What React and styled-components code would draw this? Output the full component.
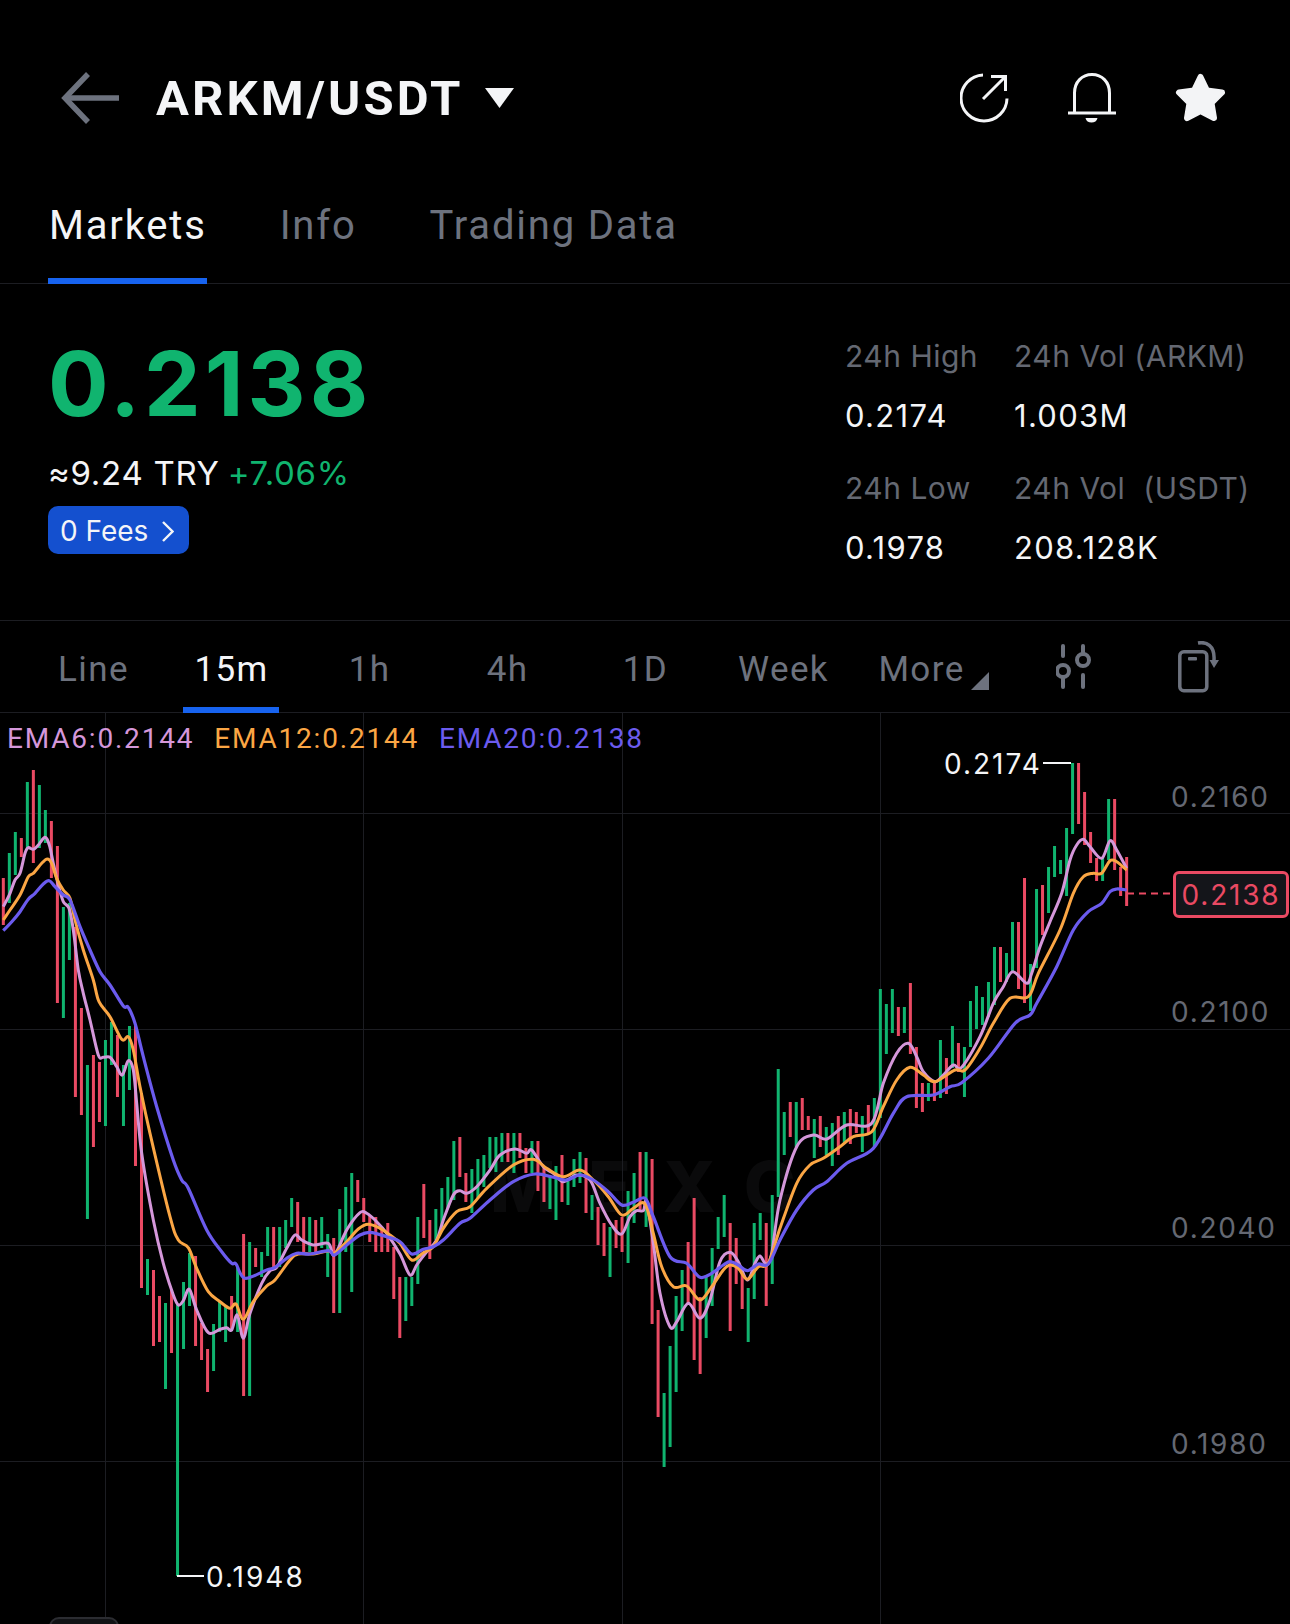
import React from "react";
import styled, { createGlobalStyle } from "styled-components";

const GREEN = "#10b46f";
const RED = "#ea4a63";
const GRAY = "#6d727e";
const LABEL = "#646872";
const BLUE = "#1763ef";
const LINE = "#1c1d22";

const Global = createGlobalStyle`
  html, body { margin: 0; padding: 0; background: #000; }
  * { box-sizing: border-box; }
`;

const Page = styled.div`
  width: 1290px;
  height: 1624px;
  overflow: hidden;
  background: #000;
  color: #f4f5f7;
  font-family: "Inter", "Liberation Sans", sans-serif;
`;

const TopBar = styled.header`
  height: 196px;
  display: flex;
  align-items: center;
  padding-left: 61px;
`;
const Title = styled.h1`
  margin: 2px 0 0 37px;
  font: 700 49px/60px "Roboto", "Liberation Sans", sans-serif;
  letter-spacing: 3.1px;
  color: #f4f5f7;
`;
const Caret = styled.svg`
  display: block;
  margin: 0 0 0 21px;
`;
const TopActions = styled.div`
  margin-left: auto;
  padding-right: 64px;
  display: flex;
  align-items: center;
  gap: 59px;
`;

const MainTabs = styled.nav`
  height: 88px;
  display: flex;
  gap: 72px;
  padding-left: 48px;
  border-bottom: 1px solid ${LINE};
`;
const MainTab = styled.div`
  height: 88px;
  padding: 8px 0 0 1px;
  font: 400 40px/44px "Roboto", "Liberation Sans", sans-serif;
  letter-spacing: 1.8px;
  color: ${(p) => (p.$active ? "#f4f5f7" : GRAY)};
  border-bottom: 6px solid ${(p) => (p.$active ? BLUE : "transparent")};
`;

const Summary = styled.section`
  height: 337px;
  display: flex;
  justify-content: space-between;
  padding: 0 0 0 48px;
  border-bottom: 1px solid ${LINE};
`;
const PriceColumn = styled.div`
  display: flex;
  flex-direction: column;
  align-items: flex-start;
`;
const Price = styled.div`
  margin: 48px 0 0 0;
  font: 700 90px/104px "Inter", "Liberation Sans", sans-serif;
  letter-spacing: 4px;
  color: ${GREEN};
`;
const FiatLine = styled.div`
  margin: 15px 0 0 0;
  font: 400 33px/44px "Inter", "Liberation Sans", sans-serif;
  letter-spacing: 0.7px;
  display: flex;
  gap: 8px;
`;
const Change = styled.span`
  color: ${GREEN};
`;
const FeeBadge = styled.div`
  margin-top: 11px;
  width: 141px;
  height: 48px;
  border-radius: 10px;
  background: #1450cf;
  display: flex;
  align-items: center;
  padding: 2px 0 0 12px;
  gap: 13px;
  font: 400 28px/46px "Inter", "Liberation Sans", sans-serif;
  letter-spacing: 0;
`;
const Stats = styled.div`
  width: 445px;
  padding-top: 52px;
  display: grid;
  grid-template-columns: 169px 1fr;
  grid-auto-rows: 60px 72px;
  align-content: start;
`;
const StatLabel = styled.div`
  font: 400 30px/40px "Inter", "Liberation Sans", sans-serif;
  letter-spacing: 0.5px;
  color: ${LABEL};
  white-space: pre;
`;
const StatValue = styled.div`
  font: 400 31px/40px "Inter", "Liberation Sans", sans-serif;
  letter-spacing: 1.3px;
  color: #f4f5f7;
`;

const IntervalBar = styled.div`
  height: 92px;
  display: grid;
  grid-template-columns: repeat(7, 138px) 1fr;
  padding-left: 23px;
  border-bottom: 1px solid ${LINE};
`;
const Interval = styled.div`
  position: relative;
  height: 91px;
  text-align: center;
  padding: 29px 0 0 3px;
  font: 400 35px/40px "Roboto", "Liberation Sans", sans-serif;
  letter-spacing: 1.4px;
  color: ${(p) => (p.$active ? "#f4f5f7" : GRAY)};
  &::after {
    content: "";
    display: ${(p) => (p.$active ? "block" : "none")};
    position: absolute;
    left: 22px;
    bottom: -1px;
    width: 96px;
    height: 6px;
    background: ${BLUE};
  }
`;
const CornerMark = styled.svg`
  position: absolute;
  left: 120px;
  top: 51px;
`;
const BarIcons = styled.div`
  display: flex;
  align-items: flex-start;
  padding: 20px 0 0 67px;
  gap: 86px;
`;
const SlidersSlot = styled.div`
  padding-top: 3px;
`;

const Chart = styled.div`
  position: relative;
  height: 911px;
  overflow: hidden;
`;
const ChartDrawing = styled.svg`
  display: block;
  position: relative;
`;
const Legend = styled.div`
  position: absolute;
  left: 7px;
  top: 12px;
  display: flex;
  gap: 20px;
  font: 400 28px/28px "Roboto", "Liberation Sans", sans-serif;
  letter-spacing: 1.8px;
`;
const LegendItem = styled.span`
  color: ${(p) => p.$color};
`;
const AxisLabel = styled.div`
  position: absolute;
  left: 1171px;
  top: ${(p) => p.$top}px;
  font: 400 28px/28px "Inter", "Liberation Sans", sans-serif;
  letter-spacing: 1.7px;
  color: ${LABEL};
`;
const PriceTag = styled.div`
  position: absolute;
  left: 1173px;
  top: 158px;
  width: 116px;
  height: 47px;
  border: 3px solid ${RED};
  border-radius: 6px;
  background: #14151a;
  color: ${RED};
  text-align: center;
  font: 400 28px/43px "Inter", "Liberation Sans", sans-serif;
  letter-spacing: 1.8px;
`;
const Extreme = styled.div`
  position: absolute;
  left: ${(p) => p.$left}px;
  top: ${(p) => p.$top}px;
  font: 400 28px/28px "Inter", "Liberation Sans", sans-serif;
  letter-spacing: 2px;
  color: #f4f5f7;
`;
const Watermark = styled.div`
  position: absolute;
  left: 490px;
  top: 434px;
  font: 800 70px/80px "Inter", "Liberation Sans", sans-serif;
  letter-spacing: 32px;
  color: #0a0a0b;
`;
const HandleTab = styled.div`
  position: absolute;
  left: 49px;
  top: 904px;
  width: 70px;
  height: 14px;
  border: 2px solid #2b2c31;
  border-radius: 10px 10px 0 0;
  background: #111215;
`;

const STEP = 6.007;
const cx = (i) => 3.33 + STEP * i;
const C = [
  "r878,925","g853,903","g832,875","r838,857","g782,848","r770,863","g785,848","g810,843","r821,878","r846,1003",
  "g907,1018","g903,960","r927,1097","r1008,1115","g1065,1219","r1055,1147","r1062,1122","g1040,1126","g1022,1065","r1035,1097",
  "g1065,1126","g1026,1090","r1026,1166","r1093,1288","g1259,1295","r1270,1346","r1296,1342","g1303,1389","r1290,1353","g1305,1576",
  "g1282,1349","g1253,1306","r1256,1346","r1323,1360","r1349,1392","g1324,1371","g1302,1332","g1305,1342","r1296,1330","g1267,1332",
  "r1234,1396","g1242,1396","r1248,1267","g1252,1277","g1227,1256","r1227,1267","g1227,1267","g1220,1248","g1198,1227","r1202,1242",
  "r1217,1252","g1217,1252","r1220,1252","g1217,1248","g1234,1277","r1238,1313","g1209,1313","g1187,1252","g1173,1292","r1180,1202",
  "r1198,1222","r1215,1242","r1217,1252","r1227,1252","r1223,1252","r1247,1299","r1277,1338","g1277,1321","g1277,1306","g1217,1284",
  "r1184,1238","r1220,1259","g1209,1240","g1188,1227","g1177,1208","g1141,1200","r1137,1177","r1173,1202","g1169,1213","g1159,1198",
  "g1155,1187","g1137,1168","g1137,1172","g1133,1162","r1133,1162","g1133,1173","r1133,1158","r1148,1173","g1141,1173","r1141,1191",
  "r1168,1202","g1177,1209","g1166,1220","r1155,1202","g1178,1205","g1159,1187","g1152,1183","r1158,1213","g1195,1220","r1207,1245",
  "r1223,1256","g1227,1277","r1220,1248","r1217,1252","g1191,1263","g1173,1223","r1152,1212","g1152,1227","r1159,1324","r1310,1417",
  "g1393,1467","g1346,1447","g1296,1392","g1270,1331","r1242,1303","r1198,1360","r1297,1374","g1275,1338","g1248,1306","g1217,1249",
  "g1195,1237","r1223,1331","r1238,1284","r1273,1309","g1288,1342","g1223,1299","g1213,1240","r1223,1306","g1195,1284","g1069,1197",
  "g1112,1155","r1102,1137","g1102,1147","r1098,1130","r1116,1130","g1119,1158","r1116,1147","g1127,1155","g1123,1166","r1116,1155",
  "g1112,1144","r1109,1144","r1112,1133","g1116,1152","r1105,1133","g1098,1147","g989,1118","g1004,1054","g989,1033","r1007,1036",
  "g1007,1033","r983,1054","r1047,1108","r1083,1112","g1083,1101","r1080,1101","g1040,1098","r1058,1094","g1026,1068","r1043,1072",
  "g1047,1097","g1001,1047","g986,1029","g997,1025","g982,1017","g947,1005","r947,982","g953,982","g922,973","r922,989",
  "r878,1003","g964,1011","g889,968","r885,935","g867,913","g846,877","g860,874","g828,896","g763,834","r763,824",
  "r792,845","r832,863","r858,881","g857,881","g799,860","r799,870","r867,896","r857,906",
].map((s) => {
  const [a, b] = s.slice(1).split(",").map(Number);
  return { color: s[0] === "g" ? GREEN : RED, top: a, bottom: b };
});

const seg = (ox, oy, pts) => pts.map(([x, y]) => [ox + x / 3, oy + y / 3]);

const PINK = [
  ...seg(0, 760, [[10,440],[30,400],[45,360],[60,340],[75,280],[85,263],[100,268],[115,255],[135,232],[148,255],[160,310],[175,375],[190,425],[207,445],[220,510],[235,630],[250,700],[270,780],[295,885],[310,892],[330,892],[350,920],[367,945],[385,902],[400,930],[410,1030],[425,1180]]),
  ...seg(0, 1180, [[460,120],[490,250],[520,345],[535,375],[550,362],[568,328],[590,390],[625,458],[660,448],[680,443],[695,450],[712,405],[730,475],[750,400],[785,310],[810,272],[830,262],[860,205],[885,165],[905,180],[940,195],[985,190],[1003,225],[1040,150],[1080,98],[1100,100],[1130,125],[1160,160]]),
  ...seg(300, 1100, [[300,462],[330,525],[350,495],[380,455],[410,420],[430,360],[460,285],[480,272],[500,280],[530,260],[570,210],[600,165],[645,147],[680,160],[695,150],[730,200],[760,220],[790,245],[830,225],[870,240],[900,310],[935,375],[965,402],[990,350],[1010,332],[1030,332],[1040,305],[1060,430],[1080,580],[1110,680],[1130,665],[1165,610]]),
  ...seg(640, 1040, [[180,835],[210,780],[240,665],[270,637],[295,665],[322,720],[345,670],[360,648],[378,672],[395,640],[420,480],[470,320],[520,285],[560,297],[620,255],[695,250],[730,130],[770,40],[805,10],[830,50],[850,95],[885,125],[910,105],[940,75],[965,82]]),
  ...seg(960, 740, [[60,890],[100,790],[130,740],[158,695],[200,730],[215,700],[240,620],[270,545],[305,460],[330,360],[350,315],[370,298],[390,320],[425,355],[450,302],[470,330],[500,385]]),
];
const ORANGE = [
  ...seg(0, 760, [[10,480],[30,450],[60,405],[85,350],[100,340],[125,310],[142,297],[155,310],[170,355],[190,390],[210,415],[225,480],[250,570],[280,660],[297,725],[330,770],[365,838],[385,830],[400,870],[420,980],[450,1120]]),
  ...seg(0, 1180, [[510,110],[535,180],[565,203],[590,265],[625,335],[660,365],[690,385],[708,372],[730,418],[760,365],[800,318],[825,300],[870,240],[895,222],[940,222],[985,213],[1003,220],[1040,185],[1075,147],[1105,133],[1140,145],[1170,165]]),
  ...seg(300, 1100, [[300,430],[335,480],[370,458],[400,440],[430,385],[470,335],[510,320],[560,265],[640,195],[700,178],[740,205],[790,230],[840,210],[880,240],[925,290],[965,345],[1000,325],[1035,312],[1060,400],[1085,500],[1120,560],[1160,558]]),
  ...seg(640, 1040, [[180,780],[215,740],[250,690],[270,675],[295,685],[322,718],[355,680],[385,670],[420,565],[470,430],[510,375],[550,355],[600,320],[640,290],[695,275],[730,200],[770,120],[810,82],[850,105],[885,125],[945,90],[975,90]]),
  ...seg(960, 740, [[60,925],[100,850],[150,775],[205,770],[235,700],[300,570],[340,460],[370,410],[400,400],[425,400],[450,362],[470,365],[500,390]]),
];
const PURPLE = [
  ...seg(0, 760, [[10,512],[40,480],[60,455],[85,418],[105,400],[130,372],[148,362],[165,380],[190,405],[210,420],[240,500],[270,570],[300,635],[330,675],[370,738],[385,742],[405,790],[430,890],[470,1040],[520,1200],[545,1260],[565,1285]]),
  ...seg(0, 1180, [[620,150],[665,215],[695,250],[708,252],[735,295],[800,270],[825,262],[860,235],[890,220],[930,222],[985,212],[1003,225],[1040,195],[1080,165],[1110,157],[1160,170]]),
  ...seg(300, 1100, [[300,425],[335,462],[370,448],[400,440],[430,420],[480,370],[510,355],[570,300],[640,245],[705,222],[760,232],[800,240],[840,225],[880,240],[925,275],[965,315],[1000,307],[1035,295],[1060,350],[1110,470],[1160,490]]),
  ...seg(640, 1040, [[180,712],[215,700],[250,675],[270,665],[295,675],[322,692],[355,672],[385,672],[420,600],[470,510],[520,450],[560,425],[620,370],[700,325],[760,220],[800,170],[880,165],[930,140],[965,128]]),
  ...seg(960, 740, [[85,955],[165,850],[210,825],[230,790],[290,680],[340,570],[385,515],[425,490],[450,455],[470,447],[500,450]]),
];

const smooth = (p) => {
  let d = `M${p[0][0].toFixed(1)} ${p[0][1].toFixed(1)}`;
  for (let i = 0; i < p.length - 1; i++) {
    const a = p[i - 1] || p[i];
    const b = p[i];
    const c = p[i + 1];
    const e = p[i + 2] || c;
    const c1x = b[0] + (c[0] - a[0]) / 6;
    const c1y = b[1] + (c[1] - a[1]) / 6;
    const c2x = c[0] - (e[0] - b[0]) / 6;
    const c2y = c[1] - (e[1] - b[1]) / 6;
    d += ` C${c1x.toFixed(1)} ${c1y.toFixed(1)} ${c2x.toFixed(1)} ${c2y.toFixed(1)} ${c[0].toFixed(1)} ${c[1].toFixed(1)}`;
  }
  return d;
};

const BackArrow = () => (
  <svg width="58" height="52" viewBox="0 0 58 52" fill="none" stroke={GRAY} strokeWidth="5.5">
    <path d="M58 26 H4" />
    <path d="M27 2 L4 26 L27 50" />
  </svg>
);
const ShareIcon = () => (
  <svg width="49" height="50" viewBox="0 0 49 50" fill="none" stroke="#f4f5f7" strokeWidth="3">
    <path d="M23 2 A23 23 0 1 0 47 25.5" />
    <path d="M23 26 L45 4" />
    <path d="M31 3.5 H45.5 V18" />
  </svg>
);
const BellIcon = () => (
  <svg width="48" height="50" viewBox="0 0 48 50" fill="none" stroke="#f4f5f7" strokeWidth="3">
    <path d="M6.5 39 V20 C6.5 9 14 1.5 24 1.5 C34 1.5 41.5 9 41.5 20 V39" />
    <path d="M0 40 H48" />
    <path d="M17.5 45 H29.5 C29 48 26.5 49.5 23.5 49.5 C20.5 49.5 18 48 17.5 45 Z" fill="#f4f5f7" stroke="none" />
  </svg>
);
const StarIcon = () => (
  <svg width="51" height="50" viewBox="0 0 51 50" fill="#f3f4f6" stroke="#f3f4f6" strokeWidth="6" strokeLinejoin="round">
    <path d="M25.5 4 L32 17.5 L47 19.5 L36.5 30 L39 45 L25.5 38 L12 45 L14.5 30 L4 19.5 L19 17.5 Z" />
  </svg>
);
const Chevron = () => (
  <svg width="13" height="21" viewBox="0 0 13 21" fill="none" stroke="#f4f5f7" strokeWidth="2.4">
    <path d="M2 1 L11.5 10.5 L2 20" />
  </svg>
);
const SlidersIcon = () => (
  <svg width="36" height="45" viewBox="0 0 36 45" fill="none" stroke={GRAY} strokeWidth="4" strokeLinecap="round">
    <path d="M7 2 V12" />
    <circle cx="7" cy="27" r="6" />
    <path d="M7 33 V43" />
    <path d="M27 2 V9" />
    <circle cx="27" cy="16" r="6" />
    <path d="M27 31 V43" />
  </svg>
);
const RotateIcon = () => (
  <svg width="41" height="52" viewBox="0 0 41 52" fill="none" stroke={GRAY}>
    <rect x="1.8" y="10.8" width="27" height="39" rx="4" strokeWidth="3.5" />
    <rect x="10" y="16" width="9" height="3.5" rx="1" fill={GRAY} stroke="none" />
    <path d="M20 2 C28 0.5 37 4 36 19" strokeWidth="3.5" />
    <path d="M31.5 19 H41 L36 27 Z" fill={GRAY} stroke="none" />
  </svg>
);

const stats = [
  ["24h High", "24h Vol (ARKM)"],
  ["0.2174", "1.003M"],
  ["24h Low", "24h Vol  (USDT)"],
  ["0.1978", "208.128K"],
];

export default function App() {
  return (
    <Page>
      <Global />
      <TopBar>
        <BackArrow />
        <Title>ARKM/USDT</Title>
        <Caret width="29" height="20" viewBox="0 0 29 20">
          <path d="M0 0 H29 L14.5 20 Z" fill="#f4f5f7" />
        </Caret>
        <TopActions>
          <ShareIcon />
          <BellIcon />
          <StarIcon />
        </TopActions>
      </TopBar>
      <MainTabs>
        <MainTab $active>Markets</MainTab>
        <MainTab>Info</MainTab>
        <MainTab>Trading Data</MainTab>
      </MainTabs>
      <Summary>
        <PriceColumn>
          <Price>0.2138</Price>
          <FiatLine>
            <span>≈9.24 TRY</span>
            <Change>+7.06%</Change>
          </FiatLine>
          <FeeBadge>
            0 Fees
            <Chevron />
          </FeeBadge>
        </PriceColumn>
        <Stats>
          {stats.map((row, i) =>
            row.map((t) =>
              i % 2 === 0 ? <StatLabel key={t}>{t}</StatLabel> : <StatValue key={t}>{t}</StatValue>
            )
          )}
        </Stats>
      </Summary>
      <IntervalBar>
        <Interval>Line</Interval>
        <Interval $active>15m</Interval>
        <Interval>1h</Interval>
        <Interval>4h</Interval>
        <Interval>1D</Interval>
        <Interval>Week</Interval>
        <Interval>
          More
          <CornerMark width="18" height="18" viewBox="0 0 18 18">
            <path d="M0 18 H18 V0 Z" fill={GRAY} />
          </CornerMark>
        </Interval>
        <BarIcons>
          <SlidersSlot>
            <SlidersIcon />
          </SlidersSlot>
          <RotateIcon />
        </BarIcons>
      </IntervalBar>
      <Chart>
        <Watermark>MEXC</Watermark>
        <ChartDrawing width="1290" height="911" viewBox="0 713 1290 911">
          {[813, 1029, 1245, 1461].map((y) => (
            <rect key={y} x="0" y={y} width="1290" height="1" fill={LINE} />
          ))}
          {[105, 363, 622, 880].map((x) => (
            <rect key={x} x={x} y="713" width="1" height="911" fill={LINE} />
          ))}
          {C.map((c, i) => (
            <rect key={i} x={cx(i) - 1.5} y={c.top} width="3" height={c.bottom - c.top} fill={c.color} />
          ))}
          <path d={smooth(PINK)} fill="none" stroke="#d597da" strokeWidth="3" />
          <path d={smooth(ORANGE)} fill="none" stroke="#fba644" strokeWidth="3" />
          <path d={smooth(PURPLE)} fill="none" stroke="#6b5bee" strokeWidth="3.2" />
          <path d="M1127 893.5 H1170" stroke={RED} strokeWidth="2" strokeDasharray="7 5" />
          <path d="M1043 763 H1071" stroke="#f4f5f7" strokeWidth="2" />
          <path d="M177 1576 H204" stroke="#f4f5f7" strokeWidth="2" />
        </ChartDrawing>
        <Legend>
          <LegendItem $color="#d597da">EMA6:0.2144</LegendItem>
          <LegendItem $color="#fba644">EMA12:0.2144</LegendItem>
          <LegendItem $color="#6b5bee">EMA20:0.2138</LegendItem>
        </Legend>
        <AxisLabel $top={70}>0.2160</AxisLabel>
        <AxisLabel $top={285}>0.2100</AxisLabel>
        <AxisLabel $top={501}>0.2040</AxisLabel>
        <AxisLabel $top={717}>0.1980</AxisLabel>
        <PriceTag>0.2138</PriceTag>
        <Extreme $left={944} $top={37}>0.2174</Extreme>
        <Extreme $left={206} $top={850}>0.1948</Extreme>
        <HandleTab />
      </Chart>
    </Page>
  );
}
